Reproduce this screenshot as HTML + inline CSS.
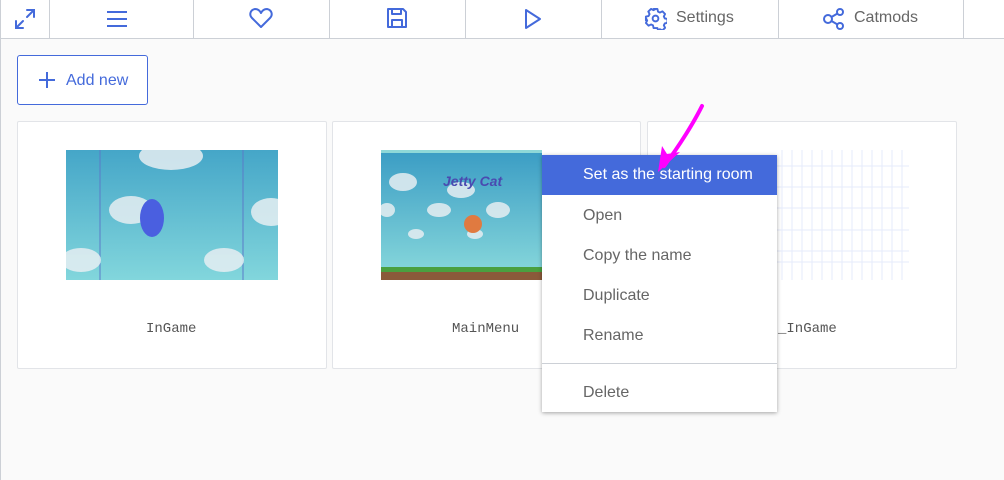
<!DOCTYPE html>
<html><head><style>
*{box-sizing:border-box;margin:0;padding:0}
body{width:1004px;height:480px;overflow:hidden;background:#fafafa;font-family:"Liberation Sans",sans-serif;position:relative}
.tb{position:absolute;left:0;top:0;width:1004px;height:39px;background:#fff;border-bottom:1px solid #ccd0d6}
.sep{position:absolute;top:0;width:1px;height:38px;background:#ccd0d6}
.ic{position:absolute}
.tt{position:absolute;top:9px;font-size:16px;color:#666}
.btn{position:absolute;left:17px;top:55px;width:131px;height:50px;border:1px solid #446adb;border-radius:3px;background:#fff;color:#446adb;font-size:16px}
.card{position:absolute;top:121px;height:248px;background:#fff;border:1px solid #e2e4e8;border-radius:2px}
.lbl{position:absolute;top:321px;font-family:"Liberation Mono",monospace;font-size:14px;color:#555}
.menu{position:absolute;left:542px;top:155px;width:235px;height:257px;background:#fff;box-shadow:0 1px 4px rgba(0,0,0,.35)}
.mi{position:absolute;left:41px;font-size:16px;color:#666}
</style></head><body>
<div class="tb">
<div class="sep" style="left:0"></div>
<div class="sep" style="left:49px"></div><div class="sep" style="left:193px"></div><div class="sep" style="left:329px"></div><div class="sep" style="left:465px"></div><div class="sep" style="left:601px"></div><div class="sep" style="left:778px"></div><div class="sep" style="left:963px"></div>
<svg class="ic" style="left:14px;top:8px" width="22" height="22" viewBox="0 0 22 22" fill="none" stroke="#446adb" stroke-width="2" stroke-linecap="round"><path d="M13 2h7v7M20 2l-7 7M9 20H2v-7M2 20l7-7"/></svg>
<svg class="ic" style="left:106px;top:9px" width="22" height="20" viewBox="0 0 22 20" stroke="#446adb" stroke-width="2"><path d="M1 3h20M1 10h20M1 17h20"/></svg>
<svg class="ic" style="left:249px;top:7px" width="24" height="22" viewBox="0 0 24 22" fill="none" stroke="#446adb" stroke-width="2" stroke-linejoin="round"><path d="M12 20L3 11C0 8 1 3 6 2c3 0 5 2 6 4c1-2 3-4 6-4c5 1 6 6 3 9z"/></svg>
<svg class="ic" style="left:386px;top:7px" width="22" height="22" viewBox="0 0 22 22" fill="none" stroke="#446adb" stroke-width="2" stroke-linejoin="round"><path d="M2 2h15l3 3v15H2z"/><path d="M6 2v5h9V2M6 20v-7h10v7"/></svg>
<svg class="ic" style="left:523px;top:8px" width="20" height="22" viewBox="0 0 20 22" fill="none" stroke="#446adb" stroke-width="2" stroke-linejoin="round"><path d="M3 2l14 9L3 20z"/></svg>
<svg class="ic" style="left:644px;top:7px" width="23" height="23" viewBox="0 0 24 24" fill="none" stroke="#446adb" stroke-width="2" stroke-linejoin="round"><circle cx="12" cy="12" r="3"/><path d="M10 2h4l.6 2.8 2 1 2.6-1.3 2.8 2.8-1.3 2.6 1 2 2.8.6v4l-2.8.6-1 2 1.3 2.6-2.8 2.8-2.6-1.3-2 1L14 22h-4l-.6-2.8-2-1-2.6 1.3-2.8-2.8 1.3-2.6-1-2L2 14v-4l2.8-.6 1-2-1.3-2.6 2.8-2.8 2.6 1.3 2-1z"/></svg>
<div class="tt" style="left:676px">Settings</div>
<svg class="ic" style="left:822px;top:7px" width="24" height="24" viewBox="0 0 24 24" fill="none" stroke="#446adb" stroke-width="2"><circle cx="6" cy="12" r="4"/><circle cx="18" cy="5" r="3"/><circle cx="18" cy="19" r="3"/><path d="M9.5 10l6-3.5M9.5 14l6 3.5"/></svg>
<div class="tt" style="left:854px">Catmods</div>
</div>
<div style="position:absolute;left:0;top:39px;width:1px;height:441px;background:#ccd0d6"></div>
<div class="btn"><svg style="position:absolute;left:20px;top:15px" width="18" height="18" viewBox="0 0 18 18" stroke="#446adb" stroke-width="2"><path d="M9 1v16M1 9h16"/></svg><span style="position:absolute;left:48px;top:16px">Add new</span></div>

<div class="card" style="left:17px;width:310px"></div>
<div class="card" style="left:332px;width:309px"></div>
<div class="card" style="left:647px;width:310px"></div>

<svg style="position:absolute;left:66px;top:150px" width="212" height="130" viewBox="0 0 212 130">
<defs><linearGradient id="g" x1="0" y1="0" x2="0" y2="1"><stop offset="0" stop-color="#45a6c8"/><stop offset="1" stop-color="#82d6dc"/></linearGradient></defs>
<rect width="212" height="130" fill="url(#g)"/>
<path d="M34 0v130M177 0v130" stroke="#5a7bc8" stroke-width="1"/>
<g fill="#e6eef2" opacity=".85"><ellipse cx="105" cy="6" rx="32" ry="14"/><ellipse cx="65" cy="60" rx="22" ry="14"/><ellipse cx="205" cy="62" rx="20" ry="14"/><ellipse cx="15" cy="110" rx="20" ry="12"/><ellipse cx="158" cy="110" rx="20" ry="12"/></g>
<ellipse cx="86" cy="68" rx="12" ry="19" fill="#4a5fe0"/>
</svg>
<svg style="position:absolute;left:381px;top:150px" width="161" height="130" viewBox="0 0 161 130">
<defs><linearGradient id="g2" x1="0" y1="0" x2="0" y2="1"><stop offset="0" stop-color="#3a9cc4"/><stop offset="1" stop-color="#8adadc"/></linearGradient></defs>
<rect width="161" height="130" fill="url(#g2)"/><rect width="161" height="3" fill="#8ed8d8"/>
<rect y="117" width="161" height="5" fill="#4aa040"/><rect y="122" width="161" height="8" fill="#8a5a3a"/>
<g fill="#e6eef2" opacity=".85"><ellipse cx="22" cy="32" rx="14" ry="9"/><ellipse cx="80" cy="40" rx="14" ry="8"/><ellipse cx="58" cy="60" rx="12" ry="7"/><ellipse cx="117" cy="60" rx="12" ry="8"/><ellipse cx="6" cy="60" rx="8" ry="7"/><ellipse cx="35" cy="84" rx="8" ry="5"/><ellipse cx="94" cy="84" rx="8" ry="5"/></g>
<text x="62" y="36" font-family="Liberation Sans" font-weight="bold" font-style="italic" font-size="14" fill="#4a4ab0">Jetty Cat</text>
<circle cx="92" cy="74" r="9" fill="#e07a40"/>
</svg>
<svg style="position:absolute;left:777px;top:150px" width="132" height="130" viewBox="0 0 132 130" stroke="#e6ebfb" stroke-width="1">
<path d="M0 16h132M0 37h132M0 58h132M0 80h132M0 101h132M0 112h132M5 0v130M15 0v130M25 0v130M35 0v130M45 0v130M55 0v130M65 0v130M75 0v130M85 0v130M95 0v130M105 0v130M115 0v130M125 0v130"/></svg>

<div class="lbl" style="left:146px">InGame</div>
<div class="lbl" style="left:452px">MainMenu</div>
<div class="lbl" style="left:778px">_InGame</div>

<div class="menu">
<div style="position:absolute;left:0;top:0;width:235px;height:40px;background:#446adb"></div>
<div class="mi" style="top:11px;color:#fff">Set as the starting room</div>
<div class="mi" style="top:52px">Open</div>
<div class="mi" style="top:92px">Copy the name</div>
<div class="mi" style="top:132px">Duplicate</div>
<div class="mi" style="top:172px">Rename</div>
<div style="position:absolute;left:0;top:208px;width:235px;height:1px;background:#ccd0d6"></div>
<div class="mi" style="top:229px">Delete</div>
</div>
<svg style="position:absolute;left:650px;top:100px" width="60" height="80" viewBox="0 0 60 80"><path d="M52 6C44 22 30 45 14 66" stroke="#ff00ff" stroke-width="4" fill="none" stroke-linecap="round"/><path d="M8 72L12 46L17 54L30 52z" fill="#ff00ff"/></svg>
</body></html>
